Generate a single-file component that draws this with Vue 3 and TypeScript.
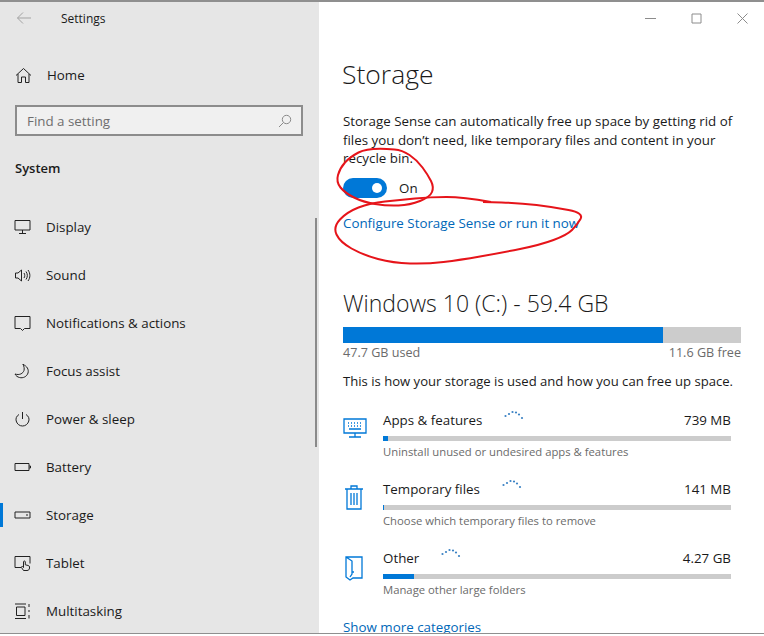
<script setup lang="ts">
import { computed } from 'vue';

interface NavItem {
  label: string;
  icon: string;
  active?: boolean;
}

interface StorageRow {
  label: string;
  size: string;
  hint: string;
  fill: number;
  icon: string;
}

const navItems: NavItem[] = [
  { label: 'Display', icon: 'M1 1.500h15v9.500H1zM8.500 11v3M5 14.500h7' },
  { label: 'Sound', icon: 'M1.500 6v5h2.500l3.500 3V3L4 6zM10 6c1 1.500 1 3.500 0 5M12 4.500c1.800 2.500 1.800 5.500 0 8M14 3c2.500 3.500 2.500 7.500 0 11' },
  { label: 'Notifications & actions', icon: 'M1 1.500h15v12h-5.500L8.500 15.500l-2-2H1z' },
  { label: 'Focus assist', icon: 'M9 1.500c4 1.500 6 5 5 8.500-1 3.500-5 5.500-8.500 4.500-2-.5-3.500-1.500-4.500-3.500 4.500 1.500 8-.5 9-3.500.5-2 0-4-1-6.500z' },
  { label: 'Power & sleep', icon: 'M8.500 1v7M5 3.500C2.500 5 1.500 7.500 2.200 10c.8 3 3.300 5 6.300 5s5.500-2 6.300-5c.7-2.500-.3-5-2.800-6.500' },
  { label: 'Battery', icon: 'M1 4.500h14v7H1zM15 7h1.500v2H15' },
  { label: 'Storage', icon: 'M1 5h15v6H1zM12 8h2', active: true },
  { label: 'Tablet', icon: 'M7 12.500H1v-11h15v7M9.500 15.500l-2-3c-.4-.8.6-1.500 1.200-.8l.8.8V6.800c0-1.100 1.800-1.100 1.800 0v3l3 .7c.8.2 1.200.8 1.200 1.500v1c0 1.500-1 2.500-2.500 2.500z' },
  { label: 'Multitasking', icon: 'M1 1h11M1 15.500h11M2.500 4h8.500v8.500H2.500zM15 1v3M15 12v3.500M15 7v2' },
];

const storageRows: StorageRow[] = [
  {
    label: 'Apps & features',
    size: '739 MB',
    hint: 'Uninstall unused or undesired apps & features',
    fill: 5,
    icon: 'M1 3h22v14H1zM12 17v3.500M6 21h12M5 7h1M8 7h1M11 7h1M14 7h1M17 7h1M5 10h1M8 10h1M11 10h1M14 10h1M17 10h1M6 13h12',
  },
  {
    label: 'Temporary files',
    size: '141 MB',
    hint: 'Choose which temporary files to remove',
    fill: 1,
    icon: 'M2 4h18M8 4V1h6v3M4 4v20h14V4M8 8v12M11 8v12M14 8v12',
  },
  {
    label: 'Other',
    size: '4.27 GB',
    hint: 'Manage other large folders',
    fill: 31,
    icon: 'M3 3h16v21h-9l-3 2-4-3zM3 3l6 4v13l-2 3M9 18h2',
  },
];

const spinnerDots = [
  [1.5, 9],
  [5, 7],
  [8.5, 5],
  [12, 5.5],
  [15, 7.5],
  [18, 11],
];

const usedPercent = computed(() => (320 / 398) * 100);

// hand-drawn loops, smoothed through the midpoints of the traced points
function smooth(points: number[][]): string {
  let d = `M${points[0][0]} ${points[0][1]}`;
  for (let i = 1; i < points.length - 1; i++) {
    const [x, y] = points[i];
    const [nx, ny] = points[i + 1];
    d += ` Q${x} ${y} ${(x + nx) / 2} ${(y + ny) / 2}`;
  }
  const last = points[points.length - 1];
  return d + ` L${last[0]} ${last[1]}`;
}

const toggleLoop = smooth([
  [387, 149], [367, 148], [350, 157], [340, 168], [336, 182], [345, 193], [363, 202], [387, 206],
  [410, 205], [430, 197], [434, 187], [428, 175], [417, 160], [402, 150], [387, 149],
]);
const linkLoop = smooth([
  [491, 202], [463, 197], [430, 197], [400, 200], [370, 203], [347, 212], [333, 227], [340, 242],
  [363, 255], [393, 263], [427, 264], [460, 260], [500, 253], [540, 245], [567, 235], [577, 225],
  [584, 213], [553, 207], [520, 203], [483, 202],
]);
</script>

<template>
  <div class="window">
    <aside class="sidebar">
      <div class="sidebar-title">
        <svg class="back" viewBox="0 0 16 14" width="16" height="14">
          <path d="M15 7H1.500M7 1.500 1.500 7 7 12.500" />
        </svg>
        <span>Settings</span>
      </div>

      <div class="home">
        <svg class="nav-icon" viewBox="0 0 17 17" width="17" height="17">
          <path d="M1 8.500 8.500 1.500 16 8.500M3 7v8.500h3.500V10h4v5.500H14V7" />
        </svg>
        <span>Home</span>
      </div>

      <div class="search">
        <span>Find a setting</span>
        <svg viewBox="0 0 14 14" width="14" height="14">
          <circle cx="8.500" cy="5.500" r="4.200" />
          <path d="M5.500 8.500 1 13" />
        </svg>
      </div>

      <div class="section">System</div>

      <nav class="nav">
        <div v-for="item in navItems" :key="item.label" class="nav-item" :class="{ active: item.active }">
          <svg class="nav-icon" viewBox="0 0 17 17" width="17" height="17">
            <path :d="item.icon" />
          </svg>
          <span>{{ item.label }}</span>
        </div>
      </nav>

      <div class="scroll-thumb"></div>
    </aside>

    <main class="content">
      <div class="window-controls">
        <svg viewBox="0 0 11 11" width="11" height="11"><path d="M0 5.500h11" /></svg>
        <svg viewBox="0 0 11 11" width="11" height="11"><path d="M1 1h9v9H1z" /></svg>
        <svg viewBox="0 0 11 11" width="11" height="11"><path d="M.5.5l10 10M10.500.5l-10 10" /></svg>
      </div>

      <h1>Storage</h1>
      <p class="intro">
        Storage Sense can automatically free up space by getting rid of files you don’t need, like temporary files and content in your recycle bin.
      </p>

      <div class="toggle-row">
        <span class="toggle"><span class="knob"></span></span>
        <span>On</span>
      </div>

      <a class="link configure">Configure Storage Sense or run it now</a>

      <h2>Windows 10 (C:) - 59.4 GB</h2>
      <div class="drive-bar">
        <div class="drive-used" :style="{ width: usedPercent + '%' }"></div>
      </div>
      <div class="drive-labels">
        <span>47.7 GB used</span>
        <span>11.6 GB free</span>
      </div>
      <p class="usage-note">This is how your storage is used and how you can free up space.</p>

      <div class="rows">
        <div v-for="row in storageRows" :key="row.label" class="row">
          <svg class="row-icon" viewBox="0 0 24 27" width="24" height="27">
            <path :d="row.icon" />
          </svg>
          <div class="row-body">
            <div class="row-head">
              <span>{{ row.label }}</span>
              <svg class="spinner" viewBox="0 0 20 14" width="20" height="14">
                <circle v-for="dot in spinnerDots" :key="dot[0]" :cx="dot[0]" :cy="dot[1]" r="1.100" />
              </svg>
              <span class="row-size">{{ row.size }}</span>
            </div>
            <div class="row-bar">
              <div class="row-fill" :style="{ width: row.fill + 'px' }"></div>
            </div>
            <div class="row-hint">{{ row.hint }}</div>
          </div>
        </div>
      </div>

      <a class="link more">Show more categories</a>
    </main>

    <div class="bottom-edge"></div>

    <svg class="scribble" viewBox="0 0 764 636" width="764" height="636">
      <path :d="toggleLoop" />
      <path :d="linkLoop" />
    </svg>
  </div>
</template>

<style scoped>
.window {
  position: relative;
  display: flex;
  width: 764px;
  height: 636px;
  overflow: hidden;
  box-sizing: border-box;
  border-top: 2px solid #8f8f8f;
  background: #fff;
  font-family: "Open Sans", "Noto Sans", sans-serif;
  font-size: 13.35px;
  color: #1a1a1a;
}

svg path,
svg circle {
  fill: none;
  stroke-width: 1;
}

.sidebar {
  position: relative;
  flex: 0 0 319px;
  height: 632px;
  background: #e6e6e6;
}

.sidebar-title {
  display: flex;
  align-items: center;
  gap: 29px;
  height: 32px;
  padding-left: 16px;
  font-size: 12px;
}

.back path {
  stroke: #a3a3a3;
}

.nav-icon path {
  stroke: #222;
}

.home {
  display: flex;
  align-items: center;
  gap: 15px;
  height: 48px;
  margin-top: 17px;
  padding-left: 15px;
}

.search {
  display: flex;
  align-items: center;
  justify-content: space-between;
  box-sizing: border-box;
  width: 288px;
  height: 31px;
  margin: 6px 0 0 15px;
  padding: 0 9px 0 10px;
  border: 2px solid #8c8c8c;
  background: #f0f0f0;
  color: #6e6e6e;
}

.search circle,
.search path {
  stroke: #8a8a8a;
}

.section {
  margin: 23px 0 0 15px;
  font-size: 13px;
  font-weight: 600;
}

.nav {
  margin-top: 26px;
}

.nav-item {
  position: relative;
  display: flex;
  align-items: center;
  gap: 15px;
  height: 48px;
  padding-left: 14px;
}

.nav-item.active::before {
  content: "";
  position: absolute;
  left: 0;
  top: 12px;
  width: 3px;
  height: 24px;
  background: #0078d7;
}

.scroll-thumb {
  position: absolute;
  top: 216px;
  right: 2px;
  width: 2px;
  height: 229px;
  background: #8a8a8a;
}

.content {
  position: relative;
  flex: 1;
  height: 632px;
  overflow: hidden;
  box-sizing: border-box;
  padding: 0 23px 0 24px;
}

.window-controls {
  display: flex;
  justify-content: flex-end;
  gap: 35px;
  height: 32px;
  padding: 11px 0 0;
  box-sizing: border-box;
  margin-right: -7px;
}

.window-controls path {
  stroke: #8c8c8c;
}

h1 {
  margin: 20px 0 0 -1px;
  font-size: 26.5px;
  font-weight: 300;
  line-height: 40px;
}

.intro {
  margin: 18px 0 0;
  line-height: 18.6px;
  width: 395px;
}

.toggle-row {
  display: flex;
  align-items: center;
  gap: 12px;
  margin-top: 10px;
  height: 20px;
}

.toggle {
  display: flex;
  align-items: center;
  justify-content: flex-end;
  box-sizing: border-box;
  width: 44px;
  height: 20px;
  padding-right: 5px;
  border-radius: 10px;
  background: #0078d7;
}

.knob {
  width: 10px;
  height: 10px;
  border-radius: 50%;
  background: #fff;
}

.link {
  display: block;
  color: #0067b8;
}

.configure {
  margin-top: 16px;
  line-height: 19px;
}

h2 {
  margin: 54px 0 0;
  font-size: 23px;
  font-weight: 300;
  line-height: 32px;
}

.drive-bar {
  height: 16px;
  margin-top: 8px;
  background: #ccc;
}

.drive-used {
  height: 100%;
  background: #0078d7;
}

.drive-labels {
  display: flex;
  justify-content: space-between;
  margin-top: 1px;
  color: #6b6b6b;
  font-size: 12.6px;
  line-height: 18px;
}

.usage-note {
  margin: 10px 0 0;
  font-size: 13.1px;
  line-height: 19px;
  white-space: nowrap;
}

.rows {
  display: flex;
  flex-direction: column;
  gap: 8px;
  margin-top: 18px;
}

.row {
  display: flex;
  gap: 16px;
  width: 388px;
  height: 61px;
}

.row-icon {
  flex: none;
  margin-top: 7px;
}

.row-icon path {
  stroke: #0078d7;
  stroke-width: 1.3;
}

.row-body {
  flex: 1;
}

.row-head {
  display: flex;
  align-items: center;
  height: 22px;
}

.spinner {
  margin: -12px 0 0 22px;
}

.spinner circle {
  fill: #3b82c4;
  stroke: none;
}

.row-size {
  margin-left: auto;
}

.row-bar {
  height: 5px;
  margin-top: 5px;
  background: #ccc;
}

.row-fill {
  height: 100%;
  background: #0078d7;
}

.row-hint {
  margin-top: 2px;
  color: #6b6b6b;
  font-size: 11.3px;
  line-height: 18px;
}

.more {
  margin-top: 10px;
  line-height: 19px;
}

.bottom-edge {
  position: absolute;
  left: 0;
  right: 0;
  bottom: 0;
  height: 2px;
  border-top: 1px solid #8f8f8f;
  background: #fff;
}

.scribble {
  position: absolute;
  left: 0;
  top: -2px;
  pointer-events: none;
}

.scribble path {
  stroke: #e6141a;
  stroke-width: 2;
  stroke-linejoin: round;
}
</style>
